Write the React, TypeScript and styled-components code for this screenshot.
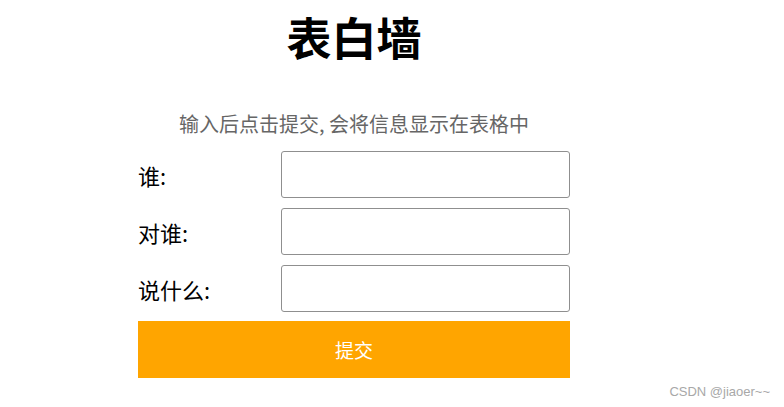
import React, { useState } from "react";
import styled, { createGlobalStyle } from "styled-components";

const GlobalStyle = createGlobalStyle`
  html, body {
    margin: 0;
    padding: 0;
    background: #fff;
    font-family: "Noto Sans CJK SC", "Noto Sans", sans-serif;
  }
`;

const Page = styled.div`
  position: relative;
  width: 784px;
  height: 407px;
  overflow: hidden;
`;

const Container = styled.div`
  width: 432px;
  margin-left: 138px;
  display: flex;
  flex-direction: column;
`;

const Title = styled.h1`
  margin: 0;
  font-size: 45px;
  font-weight: 700;
  line-height: 74px;
  text-align: center;
  color: #000;
`;

const Tip = styled.p`
  margin: 36px 0 0;
  font-size: 20px;
  line-height: 28px;
  text-align: center;
  color: #666;
`;

const Form = styled.div`
  margin-top: 13px;
  display: flex;
  flex-direction: column;
  gap: 10px;
`;

const Row = styled.div`
  display: flex;
  align-items: center;
  height: 47px;
`;

const Label = styled.span`
  width: 143px;
  font-size: 22px;
  color: #000;
`;

const Input = styled.input`
  width: 289px;
  height: 47px;
  box-sizing: border-box;
  border: 1px solid #8f8f8f;
  border-radius: 3px;
  padding: 0 8px;
  font-size: 18px;
  outline: none;
`;

const SubmitButton = styled.button`
  margin-top: -1px;
  width: 432px;
  height: 57px;
  border: none;
  background-color: #ffa500;
  color: #fff;
  font-family: "Noto Sans CJK SC", "Noto Sans", sans-serif;
  font-size: 19px;
  cursor: pointer;
`;

const Watermark = styled.div`
  position: absolute;
  right: 14px;
  bottom: 8px;
  font-family: "Liberation Sans", Arial, sans-serif;
  font-size: 13px;
  color: #a8a8a8;
`;

const App: React.FC = () => {
  const [from, setFrom] = useState("");
  const [to, setTo] = useState("");
  const [msg, setMsg] = useState("");

  const fields = [
    { label: "谁:", value: from, set: setFrom },
    { label: "对谁:", value: to, set: setTo },
    { label: "说什么:", value: msg, set: setMsg },
  ];

  return (
    <Page>
      <GlobalStyle />
      <Container>
        <Title>表白墙</Title>
        <Tip>输入后点击提交, 会将信息显示在表格中</Tip>
        <Form>
          {fields.map((f) => (
            <Row key={f.label}>
              <Label>{f.label}</Label>
              <Input value={f.value} onChange={(e) => f.set(e.target.value)} />
            </Row>
          ))}
          <SubmitButton>提交</SubmitButton>
        </Form>
      </Container>
      <Watermark>CSDN @jiaoer~~</Watermark>
    </Page>
  );
};

export default App;
